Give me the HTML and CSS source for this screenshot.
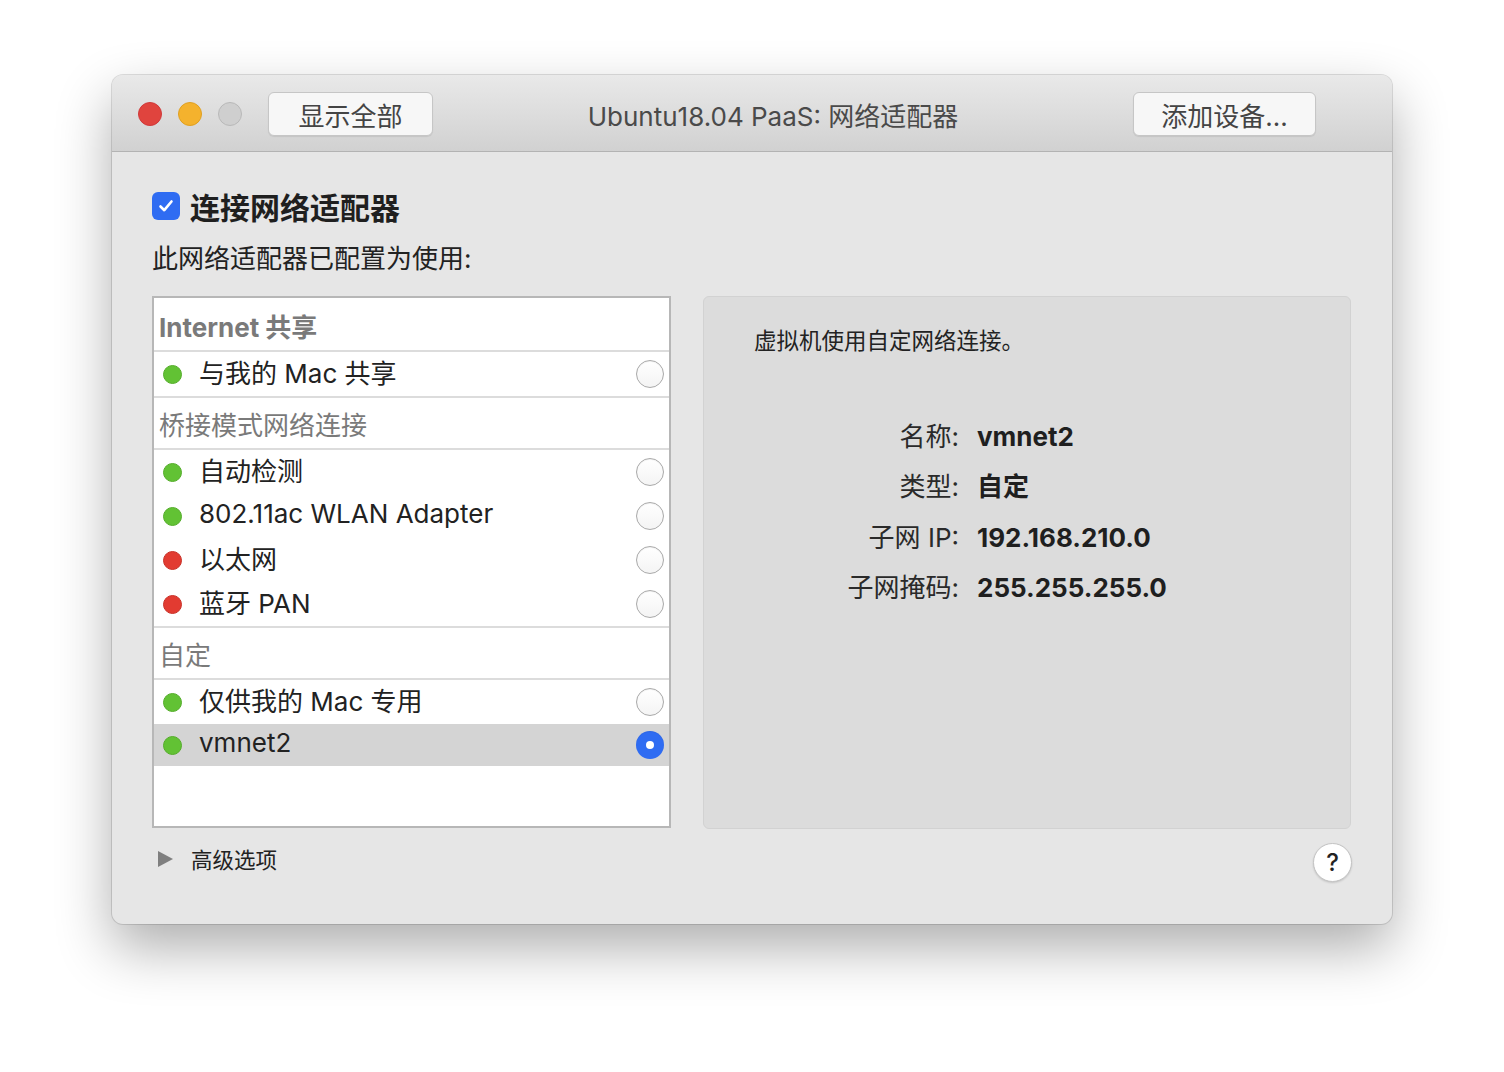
FILE: index.html
```html
<!DOCTYPE html>
<html lang="zh-CN">
<head>
    <meta charset="UTF-8">
    <title>Ubuntu18.04 PaaS: 网络适配器</title>
    <link rel="stylesheet" href="styles.css">
</head>
<body>
    <div class="window">
        <!-- Pasek tytułu -->
        <div class="titlebar">
            <div class="lights">
                <span class="light red"></span>
                <span class="light yellow"></span>
                <span class="light gray"></span>
            </div>
            <button class="tb-button show-all">显示全部</button>
            <div class="title">Ubuntu18.04 PaaS: 网络适配器</div>
            <button class="tb-button add-device">添加设备...</button>
        </div>

        <div class="content">
            <label class="connect">
                <span class="checkbox">
                    <svg width="18" height="18" viewBox="0 0 18 18"><path d="M3.5 9.5 L7.3 13.2 L14.5 4.5" fill="none" stroke="#fff" stroke-width="2.6" stroke-linecap="round" stroke-linejoin="round"/></svg>
                </span>
                连接网络适配器
            </label>
            <div class="subtitle">此网络适配器已配置为使用:</div>

            <div class="main">
                <!-- Lista połączeń -->
                <div class="list">
                    <div class="group-head latin">Internet 共享</div>
                    <div class="row"><span class="dot green"></span><span class="name">与我的 Mac 共享</span><span class="radio"></span></div>

                    <div class="group-head">桥接模式网络连接</div>
                    <div class="row"><span class="dot green"></span><span class="name">自动检测</span><span class="radio"></span></div>
                    <div class="row"><span class="dot green"></span><span class="name">802.11ac WLAN Adapter</span><span class="radio"></span></div>
                    <div class="row"><span class="dot red"></span><span class="name">以太网</span><span class="radio"></span></div>
                    <div class="row"><span class="dot red"></span><span class="name">蓝牙 PAN</span><span class="radio"></span></div>

                    <div class="group-head">自定</div>
                    <div class="row"><span class="dot green"></span><span class="name">仅供我的 Mac 专用</span><span class="radio"></span></div>
                    <div class="row selected"><span class="dot green"></span><span class="name">vmnet2</span><span class="radio on"></span></div>
                </div>

                <!-- Panel szczegółów -->
                <div class="details">
                    <p class="info">虚拟机使用自定网络连接。</p>
                    <div class="props">
                        <span class="key">名称:</span><span class="val">vmnet2</span>
                        <span class="key">类型:</span><span class="val">自定</span>
                        <span class="key">子网 IP:</span><span class="val">192.168.210.0</span>
                        <span class="key">子网掩码:</span><span class="val">255.255.255.0</span>
                    </div>
                </div>
            </div>

            <div class="footer">
                <div class="advanced"><span class="triangle"></span>高级选项</div>
                <button class="help">?</button>
            </div>
        </div>
    </div>
</body>
</html>
```

FILE: styles.css
```css
/* Ogólne */
html {
    background: #ffffff;
}

body {
    margin: 0;
    padding: 75px 0 0;
    min-height: 1072px;
    box-sizing: border-box;
    background: #ffffff;
    font-family: "Inter", "Noto Sans CJK SC", sans-serif;
    color: #222;
}

.window {
    width: 1280px;
    height: 849px;
    margin: 0 auto;
    border-radius: 11px;
    background: #e6e6e6;
    box-shadow: 0 0 0 1px rgba(0, 0, 0, 0.12), 0 24px 55px rgba(0, 0, 0, 0.32);
    overflow: hidden;
    display: flex;
    flex-direction: column;
}

/* Pasek tytułu */
.titlebar {
    height: 76px;
    flex-shrink: 0;
    display: flex;
    align-items: center;
    padding: 0 76px 0 26px;
    background: linear-gradient(#e9e9e9, #d1d1d1);
    border-bottom: 1px solid #b3b3b3;
}

.lights {
    display: flex;
    gap: 16px;
    margin-right: 26px;
    padding-top: 2px;
}

.light {
    width: 24px;
    height: 24px;
    border-radius: 50%;
    box-sizing: border-box;
}

.light.red { background: #e0443e; border: 1px solid #d0393a; }
.light.yellow { background: #f4b22d; border: 1px solid #e0a021; }
.light.gray { background: #cfcfcf; border: 1px solid #b9b9b9; }

.tb-button {
    height: 44px;
    margin-top: 2px;
    border: 1px solid #c6c6c6;
    border-radius: 6px;
    background: #f7f7f7;
    box-shadow: 0 1px 1px rgba(0, 0, 0, 0.08);
    font-family: inherit;
    font-size: 26px;
    color: #444;
    padding: 0;
}

.show-all { width: 165px; }
.add-device { width: 183px; }

.title {
    flex: 1;
    text-align: center;
    font-size: 26px;
    color: #4a4a4a;
    padding-right: 20px;
    margin-top: 2px;
}

/* Treść */
.content {
    flex: 1;
    padding: 38px 41px 0 40px;
    display: flex;
    flex-direction: column;
}

.connect {
    display: flex;
    align-items: center;
    gap: 10px;
    font-size: 30px;
    font-weight: 700;
    color: #1f1f1f;
    height: 32px;
}

.checkbox {
    width: 28px;
    height: 28px;
    border-radius: 6px;
    background: #2f6cf2;
    display: flex;
    align-items: center;
    justify-content: center;
}

.subtitle {
    margin-top: 19px;
    font-size: 26px;
    height: 36px;
    line-height: 36px;
    color: #222;
}

.main {
    margin-top: 19px;
    display: grid;
    grid-template-columns: 519px 648px;
    gap: 32px;
    height: 533px;
}

/* Lista */
.list {
    border: 2px solid #b7b7b7;
    background: #fff;
    box-sizing: border-box;
    height: 532px;
}

.group-head {
    height: 54px;
    line-height: 60px;
    padding-left: 5px;
    font-size: 26px;
    color: #7a7a7a;
    border-bottom: 2px solid #dcdcdc;
    box-sizing: border-box;
}

.group-head.latin { font-weight: 700; }

.row {
    height: 44px;
    display: flex;
    align-items: center;
    padding: 0 5px 0 9px;
    font-size: 26px;
}

.row + .group-head { border-top: 2px solid #dcdcdc; line-height: 55px; }

.row.selected { background: #d4d4d4; height: 42px; }

.dot {
    width: 19px;
    height: 19px;
    border-radius: 50%;
    box-sizing: border-box;
}

.dot.green { background: #62c234; border: 1px solid #55ad2b; }
.dot.red { background: #e23b31; border: 1px solid #c93128; }

.name {
    flex: 1;
    margin-left: 17px;
    margin-bottom: 5px;
    color: #222;
}

.radio {
    width: 28px;
    height: 28px;
    border-radius: 50%;
    box-sizing: border-box;
    border: 1px solid #a9a9a9;
    background: linear-gradient(#ffffff, #f4f4f4);
    box-shadow: inset 0 1px 1px rgba(0, 0, 0, 0.05);
}

.radio.on {
    border: none;
    background: #2f6cf2;
    display: flex;
    align-items: center;
    justify-content: center;
}

.radio.on::after {
    content: "";
    width: 8px;
    height: 8px;
    border-radius: 50%;
    background: #fff;
}

/* Szczegóły */
.details {
    background: #dcdcdc;
    border: 1px solid #d2d2d2;
    border-radius: 6px;
    padding: 26px 0 0 50px;
}

.info {
    margin: 0;
    font-size: 22.5px;
    color: #222;
}

.props {
    display: grid;
    grid-template-columns: 165px auto;
    column-gap: 18px;
    row-gap: 14px;
    margin-top: 61px;
    margin-left: 40px;
    align-items: baseline;
}

.key {
    text-align: right;
    font-size: 26px;
    color: #2a2a2a;
    height: 36px;
}

.val {
    font-size: 26px;
    font-weight: 700;
    color: #1f1f1f;
}

/* Stopka */
.footer {
    display: flex;
    align-items: center;
    justify-content: space-between;
    margin-top: 14px;
}

.advanced {
    display: flex;
    align-items: center;
    font-size: 21.5px;
    color: #222;
    margin-left: 6px;
    margin-top: -8px;
}

.triangle {
    width: 0;
    height: 0;
    border-top: 8px solid transparent;
    border-bottom: 8px solid transparent;
    border-left: 15px solid #7f7f7f;
    margin-right: 18px;
}

.help {
    width: 39px;
    height: 39px;
    border-radius: 50%;
    border: 1px solid #c4c4c4;
    background: #fff;
    box-shadow: 0 1px 2px rgba(0, 0, 0, 0.15);
    font-family: inherit;
    font-size: 24px;
    font-weight: 500;
    color: #222;
    padding: 0;
    margin-right: -1px;
}
```
